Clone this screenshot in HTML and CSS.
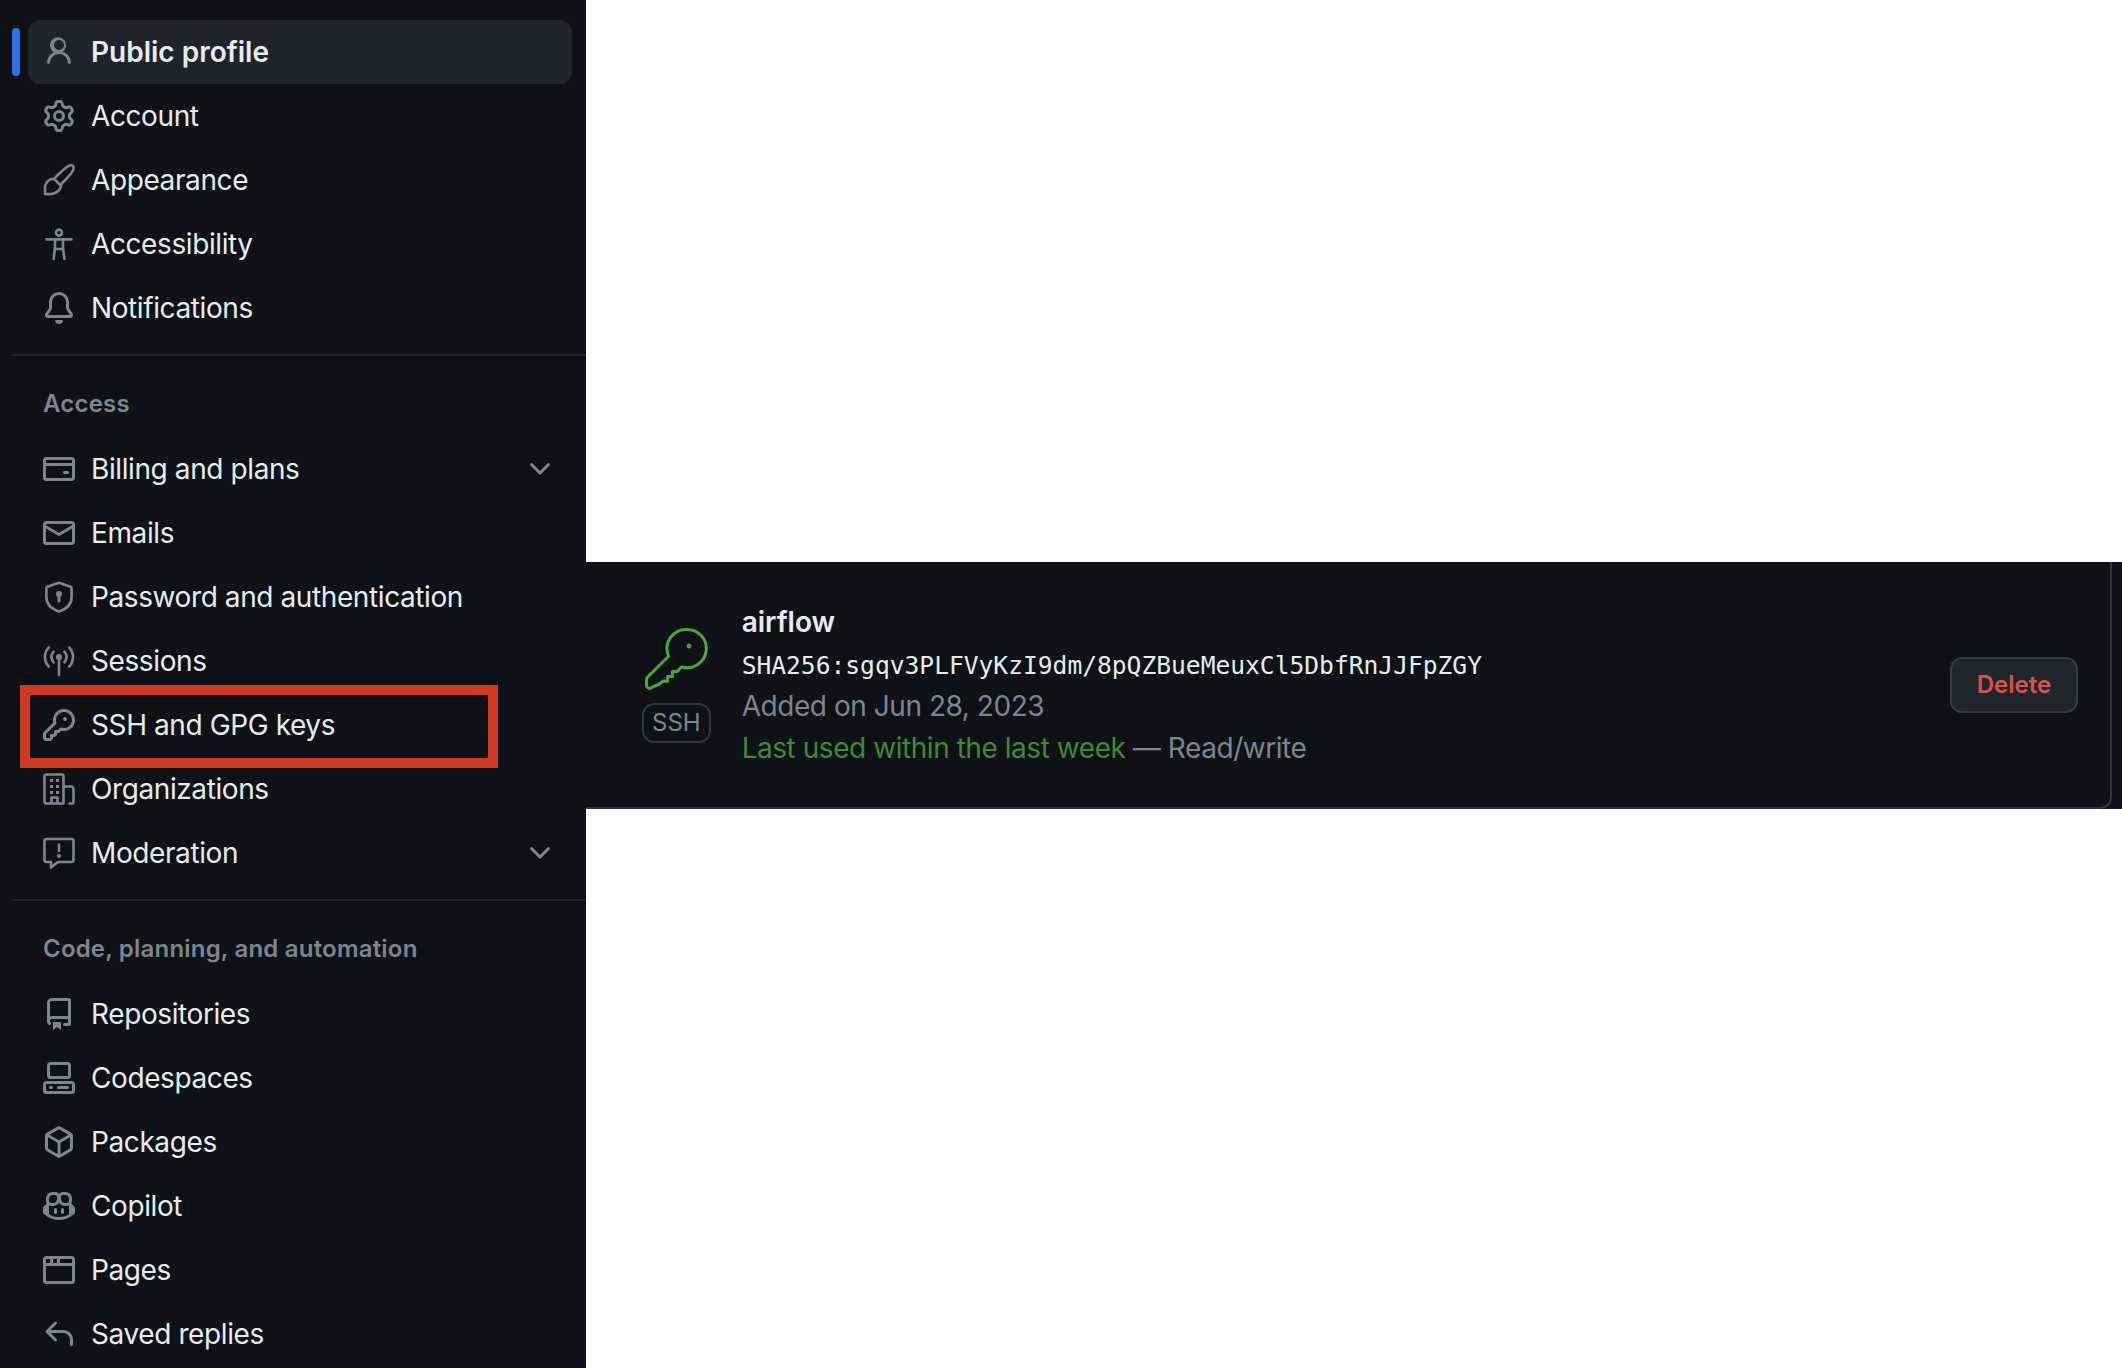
FILE: index.html
```html
<!DOCTYPE html>
<html>
<head>
    <title>SSH and GPG keys</title>
    <link rel="stylesheet" href="styles.css">
</head>
<body>
    <svg class="sprite" xmlns="http://www.w3.org/2000/svg">
        <symbol id="i-person" viewBox="0 0 16 16"><path d="M10.561 8.073a6.005 6.005 0 0 1 3.432 5.142.75.75 0 1 1-1.498.07 4.5 4.5 0 0 0-8.99 0 .75.75 0 0 1-1.498-.07 6.004 6.004 0 0 1 3.431-5.142 3.999 3.999 0 1 1 4.123 0ZM10.5 4.5a2.5 2.5 0 1 0-5 0 2.5 2.5 0 0 0 5 0Z"/></symbol>
        <symbol id="i-gear" viewBox="0 0 16 16"><path d="M8 0a8.2 8.2 0 0 1 .701.031C9.444.095 9.99.645 10.16 1.29l.288 1.107c.018.066.079.158.212.224.231.114.454.243.668.386.123.082.233.09.299.071l1.103-.303c.644-.176 1.392.021 1.82.63.27.385.506.792.704 1.218.315.675.111 1.422-.364 1.891l-.814.806c-.049.048-.098.147-.088.294.016.257.016.515 0 .772-.01.147.038.246.088.294l.814.806c.475.469.679 1.216.364 1.891a7.977 7.977 0 0 1-.704 1.217c-.428.61-1.176.807-1.82.63l-1.102-.302c-.067-.019-.177-.011-.3.071a5.909 5.909 0 0 1-.668.386c-.133.066-.194.158-.211.224l-.29 1.106c-.168.646-.715 1.196-1.458 1.26a8.006 8.006 0 0 1-1.402 0c-.743-.064-1.289-.614-1.458-1.26l-.289-1.106c-.018-.066-.079-.158-.212-.224a5.738 5.738 0 0 1-.668-.386c-.123-.082-.233-.09-.299-.071l-1.103.303c-.644.176-1.392-.021-1.82-.63a8.12 8.12 0 0 1-.704-1.218c-.315-.675-.111-1.422.363-1.891l.815-.806c.05-.048.098-.147.088-.294a6.214 6.214 0 0 1 0-.772c.01-.147-.038-.246-.088-.294l-.815-.806C.635 6.045.431 5.298.746 4.623a7.92 7.92 0 0 1 .704-1.217c.428-.61 1.176-.807 1.82-.63l1.102.302c.067.019.177.011.3-.071.214-.143.437-.272.668-.386.133-.066.194-.158.211-.224l.29-1.106C6.009.645 6.556.095 7.299.03 7.53.01 7.764 0 8 0Zm-.571 1.525c-.036.003-.108.036-.137.146l-.289 1.105c-.147.561-.549.967-.998 1.189-.173.086-.34.183-.5.29-.417.278-.97.423-1.529.27l-1.103-.303c-.109-.03-.175.016-.195.045-.22.312-.412.644-.573.99-.014.031-.021.11.059.19l.815.806c.411.406.562.957.53 1.456a4.709 4.709 0 0 0 0 .582c.032.499-.119 1.05-.53 1.456l-.815.806c-.081.08-.073.159-.059.19.162.346.353.677.573.989.02.03.085.076.195.046l1.102-.303c.56-.153 1.113-.008 1.53.27.161.107.328.204.501.29.447.222.85.629.997 1.189l.289 1.105c.029.109.101.143.137.146a6.6 6.6 0 0 0 1.142 0c.036-.003.108-.036.137-.146l.289-1.105c.147-.561.549-.967.998-1.189.173-.086.34-.183.5-.29.417-.278.97-.423 1.529-.27l1.103.303c.109.029.175-.016.195-.045.22-.313.411-.644.573-.99.014-.031.021-.11-.059-.19l-.815-.806c-.411-.406-.562-.957-.53-1.456a4.709 4.709 0 0 0 0-.582c-.032-.499.119-1.05.53-1.456l.815-.806c.081-.08.073-.159.059-.19a6.464 6.464 0 0 0-.573-.989c-.02-.03-.085-.076-.195-.046l-1.102.303c-.56.153-1.113.008-1.53-.27a4.44 4.44 0 0 0-.501-.29c-.447-.222-.85-.629-.997-1.189l-.289-1.105c-.029-.11-.101-.143-.137-.146a6.6 6.6 0 0 0-1.142 0ZM11 8a3 3 0 1 1-6 0 3 3 0 0 1 6 0ZM9.5 8a1.5 1.5 0 1 0-3.001.001A1.5 1.5 0 0 0 9.5 8Z"/></symbol>
        <symbol id="i-brush" viewBox="0 0 16 16"><path class="line" d="M15 1c-.9-.9-3 .3-5.2 2.2C8.3 4.5 6.6 6.2 5.6 7.5l2.9 2.9c1.3-1 3-2.7 4.2-4.1C14.7 4.1 15.9 1.9 15 1Z"/><path class="line" d="M5.6 7.5C3.3 7 1 9.3 1 11.9c0 1.6 0 2.9 0 3.1 2 .2 7.8.3 8.200-4.9"/></symbol>
        <symbol id="i-access" viewBox="0 0 16 16"><circle class="line" cx="8" cy="2.3" r="1.5"/><path class="line" d="M1.800 5.700h12.400M6 5.700v4.300L5.300 15.500M10 5.700v4.300l.7 5.500M6 10.500h4"/></symbol>
        <symbol id="i-bell" viewBox="0 0 16 16"><path d="M8 16a2 2 0 0 0 1.985-1.750c.017-.137-.097-.250-.235-.250h-3.500c-.138 0-.252.113-.235.250A2 2 0 0 0 8 16ZM3 5a5 5 0 0 1 10 0v2.947c0 .050.015.098.042.139l1.703 2.555A1.519 1.519 0 0 1 13.482 13H2.518a1.516 1.516 0 0 1-1.263-2.360l1.703-2.554A.255.255 0 0 0 3 7.947Zm5-3.500A3.500 3.500 0 0 0 4.500 5v2.947c0 .346-.102.683-.294.970l-1.703 2.556a.017.017 0 0 0-.003.010l.001.006c0 .002.002.004.004.006l.006.004.007.001h10.964l.007-.001.006-.004.004-.006.001-.007a.017.017 0 0 0-.003-.010l-1.703-2.554a1.745 1.745 0 0 1-.294-.970V5A3.500 3.500 0 0 0 8 1.500Z"/></symbol>
        <symbol id="i-card" viewBox="0 0 16 16"><path d="M10.750 9a.750.750 0 0 0 0 1.500h1.500a.750.750 0 0 0 0-1.500h-1.500Z"/><path d="M0 3.750C0 2.784.784 2 1.750 2h12.500c.966 0 1.750.784 1.750 1.750v8.500A1.750 1.750 0 0 1 14.250 14H1.750A1.750 1.750 0 0 1 0 12.250ZM14.500 6.500h-13v5.750c0 .138.112.250.250.250h12.500a.250.250 0 0 0 .250-.250Zm0-2.750a.250.250 0 0 0-.250-.250H1.750a.250.250 0 0 0-.250.250V5h13Z"/></symbol>
        <symbol id="i-mail" viewBox="0 0 16 16"><path d="M1.750 2h12.500c.966 0 1.750.784 1.750 1.750v8.500A1.750 1.750 0 0 1 14.250 14H1.750A1.750 1.750 0 0 1 0 12.250v-8.500C0 2.784.784 2 1.750 2ZM1.500 12.251c0 .138.112.250.250.250h12.500a.250.250 0 0 0 .250-.250V5.809L8.380 9.397a.750.750 0 0 1-.760 0L1.500 5.809v6.442Zm13-8.181v-.320a.250.250 0 0 0-.250-.250H1.750a.250.250 0 0 0-.250.250v.320L8 7.880Z"/></symbol>
        <symbol id="i-shield" viewBox="0 0 16 16"><path class="line" d="M8 .9 13.800 2.900c.3.100.5.400.5.700v4.500c0 3.300-2.400 5.800-6.300 7.100-3.900-1.300-6.300-3.800-6.300-7.100V3.600c0-.3.200-.6.500-.7L8 .9Z"/><circle cx="8" cy="6.500" r="1.500"/><path d="M7.250 7h1.500v3a.750.750 0 0 1-1.500 0Z"/></symbol>
        <symbol id="i-broadcast" viewBox="0 0 16 16"><circle cx="8" cy="6" r="1.500"/><path class="line" d="M8 7v8M5.300 3.300a3.900 3.900 0 0 0 0 5.400M10.700 3.300a3.900 3.900 0 0 1 0 5.400M2.900 1.200a7 7 0 0 0 0 9.600M13.100 1.200a7 7 0 0 1 0 9.600"/></symbol>
        <symbol id="i-key" viewBox="0 0 16 16"><path d="M10.500 0a5.499 5.499 0 1 1-1.288 10.848l-.932.932a.750.750 0 0 1-.530.220H7v.750a.750.750 0 0 1-.220.530l-.500.500a.750.750 0 0 1-.530.220H5v.750a.750.750 0 0 1-.220.530l-.500.500a.750.750 0 0 1-.530.220h-2A1.750 1.750 0 0 1 0 14.250v-2c0-.199.079-.389.220-.530l4.932-4.932A5.500 5.500 0 0 1 10.500 0Zm-4 5.500c-.001.431.069.860.205 1.269a.750.750 0 0 1-.181.768L1.500 12.560v1.690c0 .138.112.250.250.250h1.690l.060-.060v-1.190a.750.750 0 0 1 .750-.750h1.190l.060-.060v-1.190a.750.750 0 0 1 .750-.750h1.190l1.023-1.025a.750.750 0 0 1 .768-.180A4 4 0 1 0 6.500 5.500ZM11 6a1 1 0 1 1 0-2 1 1 0 0 1 0 2Z"/></symbol>
        <symbol id="i-org" viewBox="0 0 16 16"><path class="line" d="M1.550 15.250c-.4 0-.8-.4-.8-.8V1.550c0-.4.4-.8.8-.8h7.900c.4 0 .8.4.8.8v13.700ZM10.250 6.750h3.700c.7 0 1.300.6 1.300 1.300v6.700c0 .3-.2.500-.5.500h-1.500M4.250 15v-2.750h3V15"/><path d="M3.500 3h1.500v1.500H3.500ZM6.500 3H8v1.500H6.500ZM3.500 6h1.500v1.500H3.500ZM6.500 6H8v1.500H6.500ZM3.500 9h1.500v1.500H3.500ZM6.500 9H8v1.500H6.500Z"/></symbol>
        <symbol id="i-report" viewBox="0 0 16 16"><path class="line" d="M1.750 1h12.500c.550 0 1 .450 1 1v9.500c0 .550-.450 1-1 1H7.500L4 15.200V12.500H1.750c-.550 0-1-.450-1-1V2c0-.550.450-1 1-1Z"/><path class="line" d="M8 3.800v3.200"/><circle cx="8" cy="9.500" r="1"/></symbol>
        <symbol id="i-repo" viewBox="0 0 16 16"><path d="M2 2.500A2.500 2.500 0 0 1 4.500 0h8.750a.750.750 0 0 1 .750.750v12.500a.750.750 0 0 1-.750.750h-2.500a.750.750 0 0 1 0-1.500h1.750v-2h-8a1 1 0 0 0-.714 1.700.750.750 0 1 1-1.072 1.050A2.495 2.495 0 0 1 2 11.500Zm10.500-1h-8a1 1 0 0 0-1 1v6.708A2.486 2.486 0 0 1 4.500 9h8ZM5 12.250a.250.250 0 0 1 .250-.250h3.500a.250.250 0 0 1 .250.250v3.250a.250.250 0 0 1-.400.200l-1.450-1.087a.249.249 0 0 0-.300 0L5.400 15.700a.250.250 0 0 1-.400-.200Z"/></symbol>
        <symbol id="i-codespaces" viewBox="0 0 16 16"><path d="M0 11.250c0-.966.784-1.750 1.750-1.750h12.500c.966 0 1.750.784 1.750 1.750v3A1.750 1.750 0 0 1 14.250 16H1.750A1.750 1.750 0 0 1 0 14.250Zm2-9.500C2 .784 2.784 0 3.750 0h8.500C13.216 0 14 .784 14 1.750v5a1.750 1.750 0 0 1-1.750 1.750h-8.500A1.750 1.750 0 0 1 2 6.750Zm1.750-.250a.250.250 0 0 0-.250.250v5c0 .138.112.250.250.250h8.500a.250.250 0 0 0 .250-.250v-5a.250.250 0 0 0-.250-.250Zm-2 9.500a.250.250 0 0 0-.250.250v3c0 .138.112.250.250.250h12.500a.250.250 0 0 0 .250-.250v-3a.250.250 0 0 0-.250-.250Z"/><path d="M7 12.750a.750.750 0 0 1 .750-.750h4.500a.750.750 0 0 1 0 1.500h-4.500a.750.750 0 0 1-.750-.750Zm-4 0a.750.750 0 0 1 .750-.750h.500a.750.750 0 0 1 0 1.500h-.500a.750.750 0 0 1-.750-.750Z"/></symbol>
        <symbol id="i-package" viewBox="0 0 16 16"><path d="m8.878.392 5.250 3.045c.540.314.872.890.872 1.514v6.098a1.750 1.750 0 0 1-.872 1.514l-5.250 3.045a1.750 1.750 0 0 1-1.756 0l-5.250-3.045A1.750 1.750 0 0 1 1 11.049V4.951c0-.624.332-1.201.872-1.514L7.122.392a1.750 1.750 0 0 1 1.756 0ZM7.875 1.690l-4.630 2.685L8 7.133l4.755-2.758-4.630-2.685a.248.248 0 0 0-.250 0ZM2.500 5.677v5.372c0 .090.047.171.125.216l4.625 2.683V8.432Zm6.250 8.271 4.625-2.683a.250.250 0 0 0 .125-.216V5.677L8.750 8.432Z"/></symbol>
        <symbol id="i-copilot" viewBox="0 0 16 16"><path d="M7.998 15.035c-4.562 0-7.873-2.914-7.998-3.749V9.338c.085-.628.677-1.686 1.588-2.065.013-.070.024-.143.036-.218.029-.183.060-.384.126-.612-.201-.508-.254-1.084-.254-1.656 0-.870.128-1.769.693-2.484.579-.733 1.494-1.124 2.724-1.261 1.206-.134 2.262.034 2.944.765.050.053.096.108.139.165.044-.057.094-.112.143-.165.682-.731 1.738-.899 2.944-.765 1.230.137 2.145.528 2.724 1.261.566.715.693 1.614.693 2.484 0 .572-.053 1.148-.254 1.656.066.228.098.429.126.612.012.076.024.148.037.218.924.385 1.522 1.471 1.591 2.095v1.872c0 .766-3.351 3.795-8.002 3.795Zm0-1.485c2.280 0 4.584-1.110 5.002-1.433V7.862l-.023-.116c-.490.210-1.075.291-1.727.291-1.146 0-2.059-.327-2.710-.991A3.222 3.222 0 0 1 8 6.303a3.240 3.240 0 0 1-.544.743c-.650.664-1.563.991-2.710.991-.652 0-1.236-.081-1.727-.291l-.023.116v4.255c.419.323 2.722 1.433 5.002 1.433ZM6.762 2.830c-.193-.206-.637-.413-1.682-.297-1.019.113-1.479.404-1.713.700-.247.312-.369.789-.369 1.554 0 .793.129 1.171.308 1.371.162.181.519.379 1.442.379.853 0 1.339-.235 1.638-.540.315-.322.527-.827.617-1.553.117-.935-.037-1.395-.241-1.614Zm4.155-.297c-1.044-.116-1.488.091-1.681.297-.204.219-.359.679-.242 1.614.091.726.303 1.231.618 1.553.299.305.784.540 1.638.540.922 0 1.280-.198 1.442-.379.179-.200.308-.578.308-1.371 0-.765-.123-1.242-.370-1.554-.233-.296-.693-.587-1.713-.700Z"/><path d="M6.250 9.037a.750.750 0 0 1 .750.750v1.501a.750.750 0 0 1-1.500 0V9.787a.750.750 0 0 1 .750-.750Zm4.250.750v1.501a.750.750 0 0 1-1.500 0V9.787a.750.750 0 0 1 1.500 0Z"/></symbol>
        <symbol id="i-browser" viewBox="0 0 16 16"><path d="M0 2.750C0 1.784.784 1 1.750 1h12.500c.966 0 1.750.784 1.750 1.750v10.500A1.750 1.750 0 0 1 14.250 15H1.750A1.750 1.750 0 0 1 0 13.250ZM14.500 6h-13v7.250c0 .138.112.250.250.250h12.500a.250.250 0 0 0 .250-.250Zm-6-3.500v2h6V2.750a.250.250 0 0 0-.250-.250ZM5 2.500v2h2v-2Zm-3.250 0a.250.250 0 0 0-.250.250V4.500h2v-2Z"/></symbol>
        <symbol id="i-reply" viewBox="0 0 16 16"><path d="M6.780 1.970a.750.750 0 0 1 0 1.060L3.810 6h6.440A4.750 4.750 0 0 1 15 10.750v2.500a.750.750 0 0 1-1.500 0v-2.500a3.250 3.250 0 0 0-3.250-3.250H3.810l2.970 2.970a.749.749 0 0 1-.326 1.275.749.749 0 0 1-.734-.215L1.470 7.280a.750.750 0 0 1 0-1.060l4.250-4.250a.750.750 0 0 1 1.060 0Z"/></symbol>
        <symbol id="i-chevron" viewBox="0 0 16 16"><path d="M12.780 5.220a.749.749 0 0 1 0 1.060l-4.250 4.250a.749.749 0 0 1-1.060 0L3.220 6.280a.749.749 0 1 1 1.060-1.060L8 8.939l3.720-3.719a.749.749 0 0 1 1.060 0Z"/></symbol>
    </svg>

    <div class="page">
        <nav class="sidebar">
            <ul class="nav-list">
                <li class="nav-item active"><svg class="icon"><use href="#i-person"/></svg>Public profile</li>
                <li class="nav-item"><svg class="icon"><use href="#i-gear"/></svg>Account</li>
                <li class="nav-item"><svg class="icon"><use href="#i-brush"/></svg>Appearance</li>
                <li class="nav-item"><svg class="icon"><use href="#i-access"/></svg>Accessibility</li>
                <li class="nav-item"><svg class="icon"><use href="#i-bell"/></svg>Notifications</li>
            </ul>
            <div class="nav-divider"></div>
            <h2 class="nav-heading">Access</h2>
            <ul class="nav-list">
                <li class="nav-item"><svg class="icon"><use href="#i-card"/></svg>Billing and plans<svg class="icon chevron"><use href="#i-chevron"/></svg></li>
                <li class="nav-item"><svg class="icon"><use href="#i-mail"/></svg>Emails</li>
                <li class="nav-item"><svg class="icon"><use href="#i-shield"/></svg>Password and authentication</li>
                <li class="nav-item"><svg class="icon"><use href="#i-broadcast"/></svg>Sessions</li>
                <li class="nav-item highlighted"><svg class="icon"><use href="#i-key"/></svg>SSH and GPG keys</li>
                <li class="nav-item"><svg class="icon"><use href="#i-org"/></svg>Organizations</li>
                <li class="nav-item"><svg class="icon"><use href="#i-report"/></svg>Moderation<svg class="icon chevron"><use href="#i-chevron"/></svg></li>
            </ul>
            <div class="nav-divider"></div>
            <h2 class="nav-heading">Code, planning, and automation</h2>
            <ul class="nav-list">
                <li class="nav-item"><svg class="icon"><use href="#i-repo"/></svg>Repositories</li>
                <li class="nav-item"><svg class="icon"><use href="#i-codespaces"/></svg>Codespaces</li>
                <li class="nav-item"><svg class="icon"><use href="#i-package"/></svg>Packages</li>
                <li class="nav-item"><svg class="icon"><use href="#i-copilot"/></svg>Copilot</li>
                <li class="nav-item"><svg class="icon"><use href="#i-browser"/></svg>Pages</li>
                <li class="nav-item"><svg class="icon"><use href="#i-reply"/></svg>Saved replies</li>
            </ul>
        </nav>

        <main class="main">
            <div class="key-band">
                <div class="key-card">
                    <div class="key-type">
                        <svg class="key-icon" viewBox="0 0 32 32">
                            <path d="M21.500 1.200a9.600 9.600 0 1 1-2.700 18.800l-2.300 2.300h-2.300v2.400h-2.400v2.400H9.400l-1.900 1.500c-.3.200-.6.300-1 .3L3 30.700c-1 .1-1.700-.5-1.700-1.500v-3c0-.4.100-.8.400-1.100l10.600-10.500a9.600 9.600 0 0 1 9.200-13.400Z"/>
                            <circle class="key-dot" cx="22.500" cy="9.500" r="1.200"/>
                        </svg>
                        <span class="key-badge">SSH</span>
                    </div>
                    <div class="key-info">
                        <div class="key-name">airflow</div>
                        <div class="key-hash">SHA256:sgqv3PLFVyKzI9dm/8pQZBueMeuxCl5DbfRnJJFpZGY</div>
                        <div class="key-meta">Added on Jun 28, 2023</div>
                        <div class="key-meta"><span class="key-used">Last used within the last week</span> — Read/write</div>
                    </div>
                    <button class="delete-btn">Delete</button>
                </div>
            </div>
        </main>
    </div>
</body>
</html>
```

FILE: styles.css
```css
html, body {
    margin: 0;
    height: 100%;
    background: #fff;
}
body {
    font-family: Inter, "Liberation Sans", sans-serif;
    font-size: 28px;
    overflow: hidden;
}
.sprite {
    display: none;
}
.page {
    display: grid;
    grid-template-columns: 586px 1fr;
    height: 1368px;
}

/* sidebar */
.sidebar {
    background: #0e1216;
    padding: 20px 0 0 12px;
    color: #e6edf3;
}
.nav-list {
    list-style: none;
    margin: 0;
    padding: 0 14px 0 16px;
}
.nav-item {
    position: relative;
    display: flex;
    align-items: center;
    gap: 16px;
    height: 64px;
    padding: 0 16px;
    border-radius: 12px;
    letter-spacing: -0.4px;
}
.nav-item.active {
    background: #1f242b;
    font-weight: 600;
    letter-spacing: 0;
}
.nav-item.active::before {
    content: "";
    position: absolute;
    left: -16px;
    top: 8px;
    width: 8px;
    height: 48px;
    border-radius: 4px;
    background: #2f6fe8;
}
.nav-item.highlighted::after {
    content: "";
    position: absolute;
    left: -8px;
    top: -8px;
    width: 458px;
    height: 63px;
    border: 10px solid #cf3a21;
}
.icon {
    width: 32px;
    height: 32px;
    flex: none;
    margin-left: -1px;
    fill: #7d8590;
}
.line {
    fill: none;
    stroke: #7d8590;
    stroke-width: 1.3;
    stroke-linecap: round;
    stroke-linejoin: round;
}
.chevron {
    margin-left: auto;
}
.nav-divider {
    height: 2px;
    margin: 14px 0 0;
    background: #21262d;
}
.nav-heading {
    margin: 0;
    padding: 32px 0 17px 31px;
    font-size: 24px;
    line-height: 32px;
    font-weight: 600;
    letter-spacing: 0.2px;
    color: #7d8590;
}

/* key card */
.main {
    padding-top: 562px;
}
.key-band {
    height: 247px;
    padding-right: 10px;
    background: #0e1216;
}
.key-card {
    display: flex;
    align-items: center;
    height: 100%;
    box-sizing: border-box;
    padding: 0 32px 0 56px;
    border-right: 2px solid #30363d;
    border-bottom: 2px solid #30363d;
    border-bottom-right-radius: 12px;
}
.key-type {
    display: flex;
    flex-direction: column;
    align-items: center;
    gap: 12px;
    margin-right: 31px;
}
.key-icon {
    display: block;
    width: 64px;
    height: 64px;
    fill: none;
    stroke: #4aa63f;
    stroke-width: 1.5;
    stroke-linejoin: round;
}
.key-dot {
    fill: #4aa63f;
    stroke: none;
}
.key-badge {
    padding: 0 8px;
    border: 2px solid #30363d;
    border-radius: 12px;
    font-size: 24px;
    line-height: 36px;
    color: #7d8590;
}
.key-info {
    flex: 1;
    line-height: 42px;
}
.key-name {
    font-weight: 600;
    color: #e6edf3;
}
.key-hash {
    padding-top: 3px;
    font-family: "DejaVu Sans Mono", monospace;
    font-size: 24.6px;
    line-height: 39px;
    color: #e6edf3;
}
.key-meta {
    letter-spacing: -0.45px;
    color: #7d8590;
}
.key-used {
    color: #3d8a38;
}
.delete-btn {
    width: 128px;
    height: 56px;
    padding: 0;
    border: 2px solid #363b42;
    border-radius: 12px;
    background: #21262d;
    color: #d9534a;
    font-family: Inter, "Liberation Sans", sans-serif;
    font-size: 24px;
    font-weight: 600;
}
```
